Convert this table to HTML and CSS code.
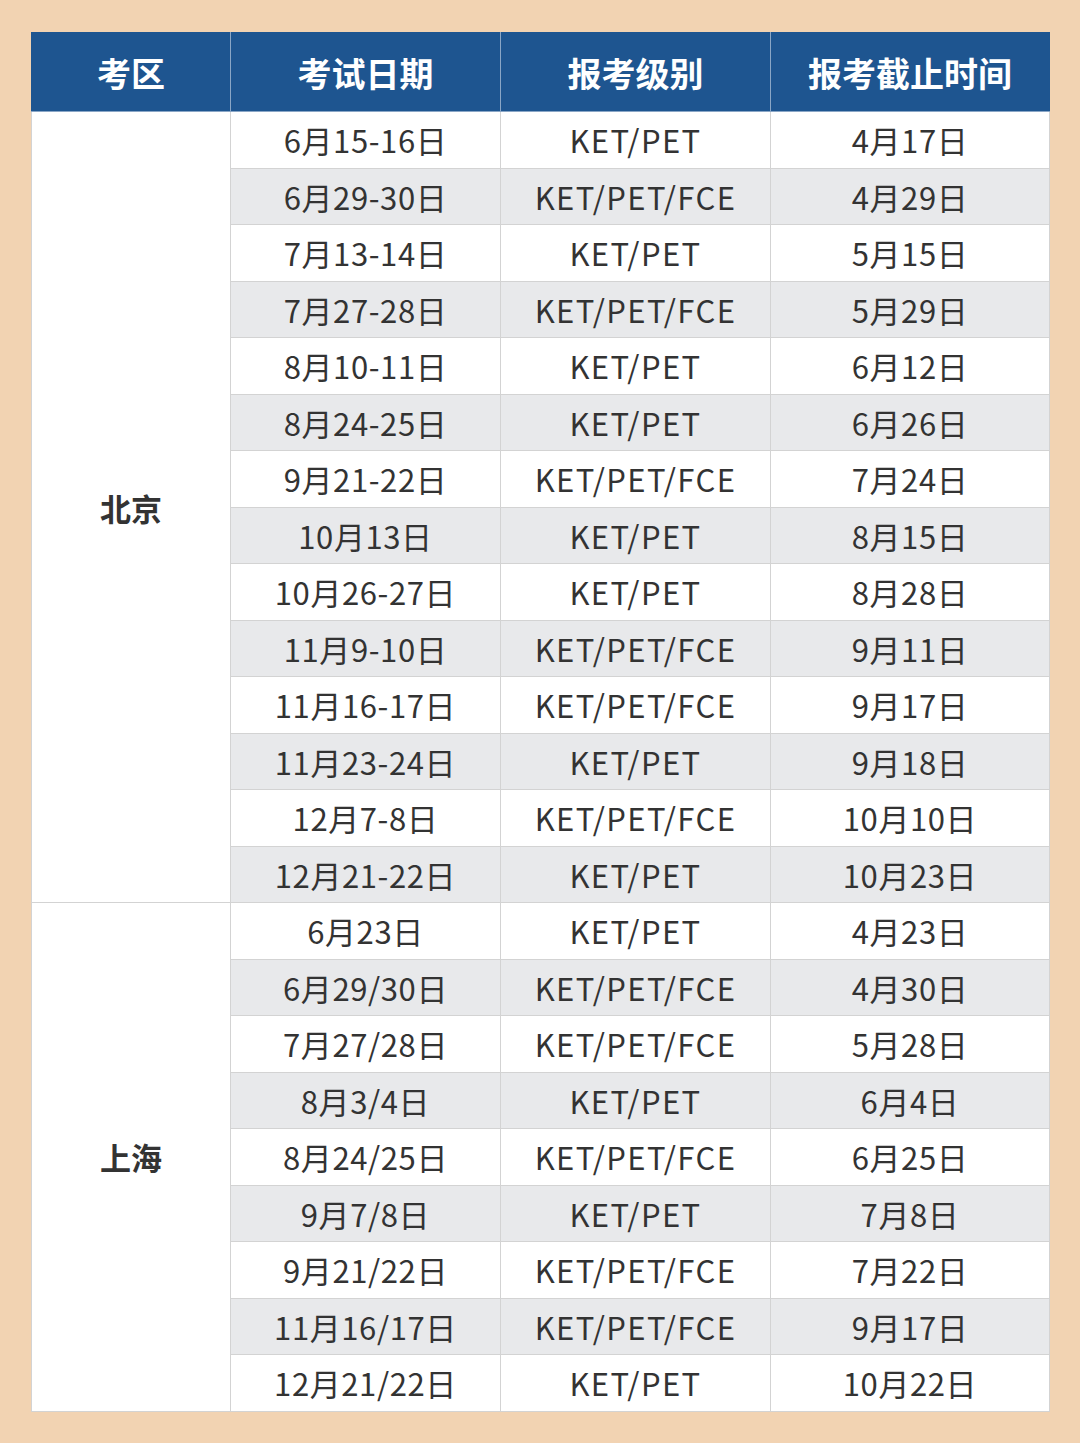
FILE: index.html
```html
<!DOCTYPE html>
<html lang="zh-CN">
<head>
<meta charset="utf-8">
<link rel="stylesheet" href="styles.css">
</head>
<body>
<div class="page">
<table class="schedule">
<colgroup>
<col class="c1"><col class="c2"><col class="c3"><col class="c4">
</colgroup>
<thead>
<tr><th>考区</th><th>考试日期</th><th>报考级别</th><th>报考截止时间</th></tr>
</thead>
<tbody>
<tr><td class="region" rowspan="14">北京</td><td>6月15-16日</td><td class="lvl">KET/PET</td><td>4月17日</td></tr>
<tr class="alt"><td>6月29-30日</td><td class="lvl">KET/PET/FCE</td><td>4月29日</td></tr>
<tr><td>7月13-14日</td><td class="lvl">KET/PET</td><td>5月15日</td></tr>
<tr class="alt"><td>7月27-28日</td><td class="lvl">KET/PET/FCE</td><td>5月29日</td></tr>
<tr><td>8月10-11日</td><td class="lvl">KET/PET</td><td>6月12日</td></tr>
<tr class="alt"><td>8月24-25日</td><td class="lvl">KET/PET</td><td>6月26日</td></tr>
<tr><td>9月21-22日</td><td class="lvl">KET/PET/FCE</td><td>7月24日</td></tr>
<tr class="alt"><td>10月13日</td><td class="lvl">KET/PET</td><td>8月15日</td></tr>
<tr><td>10月26-27日</td><td class="lvl">KET/PET</td><td>8月28日</td></tr>
<tr class="alt"><td>11月9-10日</td><td class="lvl">KET/PET/FCE</td><td>9月11日</td></tr>
<tr><td>11月16-17日</td><td class="lvl">KET/PET/FCE</td><td>9月17日</td></tr>
<tr class="alt"><td>11月23-24日</td><td class="lvl">KET/PET</td><td>9月18日</td></tr>
<tr><td>12月7-8日</td><td class="lvl">KET/PET/FCE</td><td>10月10日</td></tr>
<tr class="alt"><td>12月21-22日</td><td class="lvl">KET/PET</td><td>10月23日</td></tr>
<tr><td class="region" rowspan="9">上海</td><td>6月23日</td><td class="lvl">KET/PET</td><td>4月23日</td></tr>
<tr class="alt"><td>6月29/30日</td><td class="lvl">KET/PET/FCE</td><td>4月30日</td></tr>
<tr><td>7月27/28日</td><td class="lvl">KET/PET/FCE</td><td>5月28日</td></tr>
<tr class="alt"><td>8月3/4日</td><td class="lvl">KET/PET</td><td>6月4日</td></tr>
<tr><td>8月24/25日</td><td class="lvl">KET/PET/FCE</td><td>6月25日</td></tr>
<tr class="alt"><td>9月7/8日</td><td class="lvl">KET/PET</td><td>7月8日</td></tr>
<tr><td>9月21/22日</td><td class="lvl">KET/PET/FCE</td><td>7月22日</td></tr>
<tr class="alt"><td>11月16/17日</td><td class="lvl">KET/PET/FCE</td><td>9月17日</td></tr>
<tr><td>12月21/22日</td><td class="lvl">KET/PET</td><td>10月22日</td></tr>
</tbody>
</table>
</div>
</body>
</html>
```
FILE: styles.css
```css
html, body {
  margin: 0;
  padding: 0;
  background: #f2d3b2;
}
.page {
  width: 1080px;
  height: 1443px;
  padding: 32px 0 0 31px;
  box-sizing: border-box;
}
.schedule {
  border-collapse: collapse;
  table-layout: fixed;
  width: 1018px;
  font-family: "Noto Sans CJK SC", "Noto Sans", sans-serif;
  color: #333333;
  background: #ffffff;
}
.c1 { width: 199px; }
.c2 { width: 270px; }
.c3 { width: 270px; }
.c4 { width: 279px; }
.schedule th {
  background: #1e5590;
  color: #ffffff;
  font-size: 34px;
  font-weight: 700;
  height: 78px;
  padding: 0;
  border: 1px solid #8aa6c6;
  border-top-color: #1e5590;
  text-align: center;
  vertical-align: middle;
}
.schedule th:first-child { border-left-color: #1e5590; }
.schedule th:last-child { border-right-color: #1e5590; }
.schedule td {
  height: 55.5px;
  padding: 0;
  border: 1px solid #d3d3d3;
  text-align: center;
  vertical-align: middle;
  font-size: 31px;
  font-weight: 400;
  line-height: 1;
  letter-spacing: 0.6px;
}
.schedule td.lvl { letter-spacing: 1.4px; }
.schedule tr.alt td { background: #e8e9eb; }
.schedule td.region {
  background: #ffffff;
  font-weight: 700;
  letter-spacing: 0;
}
```
